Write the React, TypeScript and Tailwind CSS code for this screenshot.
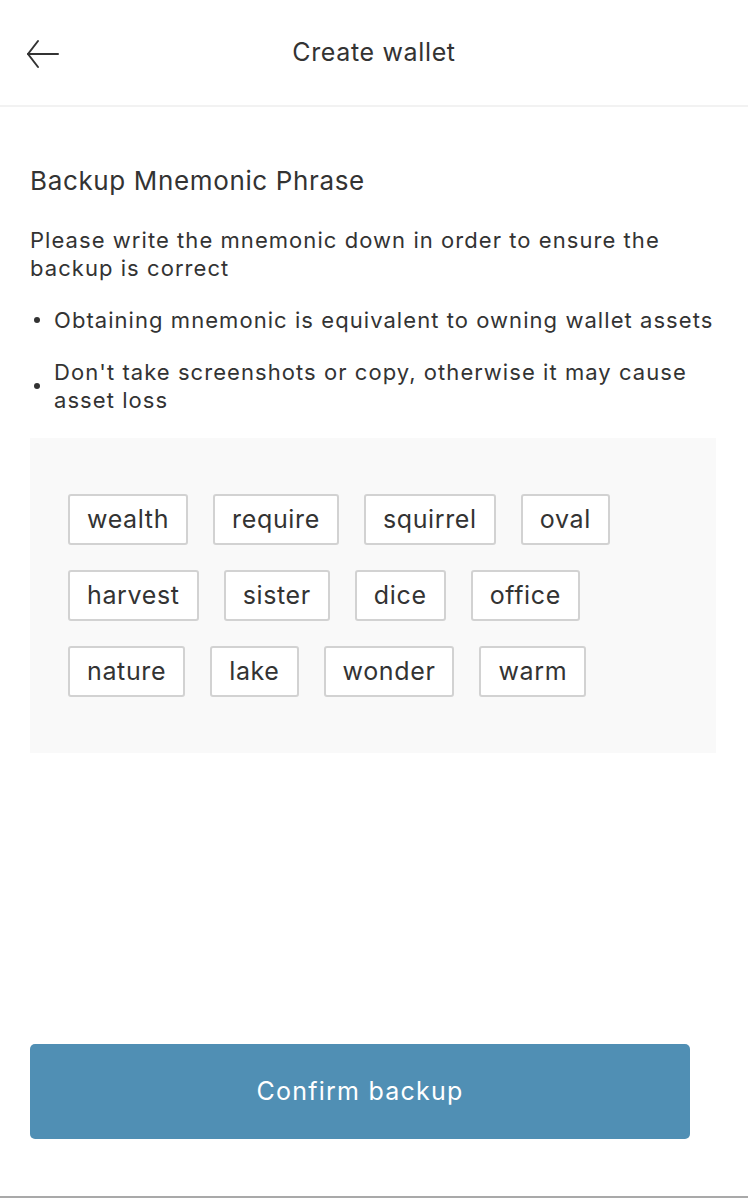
const words = [
  ['wealth', 'require', 'squirrel', 'oval'],
  ['harvest', 'sister', 'dice', 'office'],
  ['nature', 'lake', 'wonder', 'warm'],
]

const tips = [
  'Obtaining mnemonic is equivalent to owning wallet assets',
  "Don't take screenshots or copy, otherwise it may cause asset loss",
]

function BackArrow() {
  return (
    <svg width="34" height="30" viewBox="0 0 34 30" fill="none" stroke="#333" strokeWidth="2" strokeLinecap="round">
      <path d="M2 15 H32" />
      <path d="M12 2 L2 15 L12 28" strokeLinejoin="round" />
    </svg>
  )
}

export default function App() {
  return (
    <div
      className="h-[1198px] w-[748px] bg-white flex flex-col text-[#333] tracking-[0.04em] border-b-2 border-[#a9a9a9]"
      style={{ fontFamily: 'Inter, Roboto, "Liberation Sans", sans-serif' }}
    >
      <header className="relative h-[107px] flex items-center justify-center border-b-2 border-[#f2f2f2] shrink-0">
        <button className="absolute left-[26px] top-[39px]">
          <BackArrow />
        </button>
        <h1 className="text-[25px] leading-none">Create wallet</h1>
      </header>

      <main className="flex-1 flex flex-col px-[30px]">
        <h2 className="mt-[58px] text-[26px] leading-[32px]">Backup Mnemonic Phrase</h2>

        <p className="mt-[29px] text-[22px] leading-[28px] tracking-[0.048em]">
          Please write the mnemonic down in order to ensure the backup is correct
        </p>

        <ul className="mt-[24px] flex flex-col gap-[24px]">
          {tips.map(tip => (
            <li key={tip} className="flex items-center gap-[14px] text-[22px] leading-[28px] tracking-[0.048em]">
              <span className="w-[6px] h-[6px] rounded-full bg-[#333] shrink-0 ml-[4px]" />
              <span>{tip}</span>
            </li>
          ))}
        </ul>

        <div className="mt-[24px] mr-[2px] bg-[#f9f9f9] px-[38px] py-[56px] flex flex-col gap-[25px]">
          {words.map((row, i) => (
            <div key={i} className="flex gap-[25px]">
              {row.map(w => (
                <span
                  key={w}
                  className="h-[51px] px-[17px] flex items-center bg-white border-2 border-[#d2d2d2] rounded-[3px] text-[25px]"
                >
                  {w}
                </span>
              ))}
            </div>
          ))}
        </div>

        <div className="flex-1" />

        <button className="mb-[57px] w-[660px] h-[95px] rounded-[5px] bg-[#508fb4] text-white text-[25px] tracking-[0.05em]">
          Confirm backup
        </button>
      </main>
    </div>
  )
}
